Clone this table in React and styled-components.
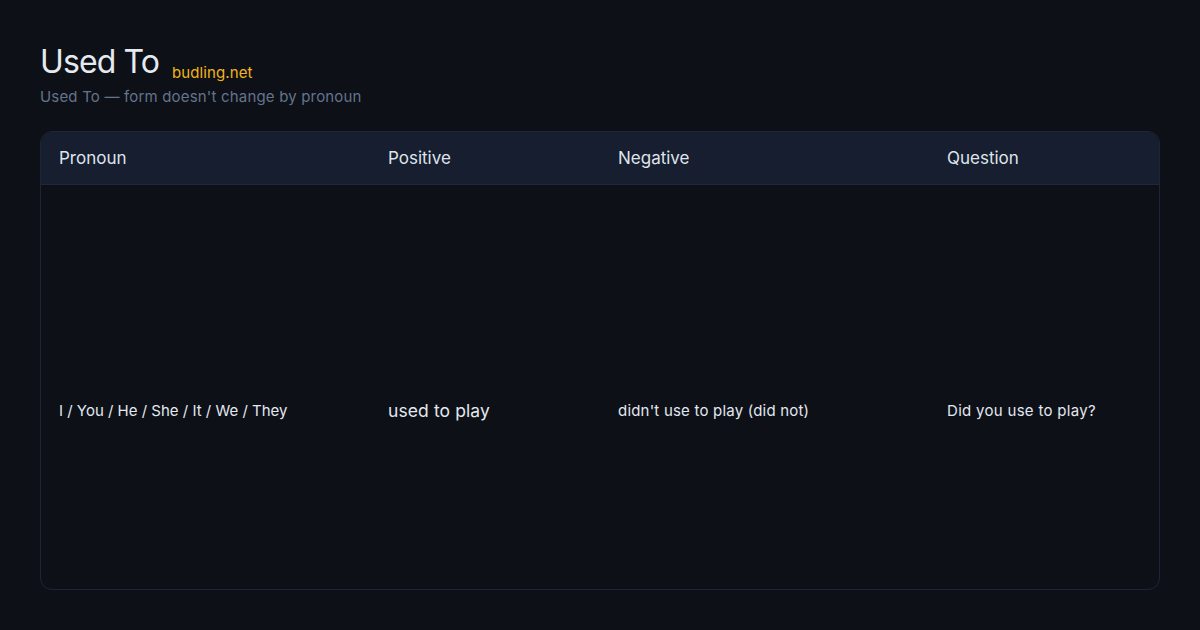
import React from "react";
import styled, { createGlobalStyle } from "styled-components";

const Global = createGlobalStyle`
  html, body { margin: 0; padding: 0; background: #0d1017; }
  body { font-family: Inter, "Noto Sans", sans-serif; }
  #root { height: 630px; }
`;

const Page = styled.div`
  box-sizing: border-box;
  height: 630px;
  padding: 41px 40px 40px;
  display: flex;
  flex-direction: column;
  background: #0d1017;
  color: #e2e8f0;
`;

const TitleRow = styled.div`
  display: flex;
  align-items: flex-end;
  gap: 13px;
`;

const Title = styled.h1`
  margin: 0;
  font-size: 32px;
  font-weight: 400;
  line-height: 42px;
  color: #e5e9f0;
  letter-spacing: -0.9px;
`;

const Brand = styled.span`
  font-size: 15px;
  line-height: 20px;
  color: #f4b41a;
  letter-spacing: 0.1px;
`;

const Subtitle = styled.p`
  margin: 4px 0 0;
  font-size: 15px;
  line-height: 20px;
  color: #64748b;
  letter-spacing: 0.18px;
`;

const Card = styled.div`
  flex: 1;
  margin-top: 24px;
  border: 1px solid #1e2636;
  border-radius: 12px;
  overflow: hidden;
  display: flex;
  flex-direction: column;
`;

const cols = "329px 230px 329px 1fr";

const HeadRow = styled.div`
  display: grid;
  grid-template-columns: ${cols};
  height: 52px;
  align-items: center;
  background: #171e2f;
  border-bottom: 1px solid #1e2a3c;
`;

const HeadCell = styled.div`
  padding-left: 18px;
  font-size: 17px;
  color: #dfe4ec;
`;

const BodyRow = styled.div`
  flex: 1;
  box-sizing: border-box;
  padding-top: 46px;
  display: grid;
  grid-template-columns: ${cols};
  align-items: center;
`;

const Cell = styled.div`
  padding-left: 18px;
  font-size: ${(p) => p.$size || 15}px;
  letter-spacing: ${(p) => p.$ls ?? 0.2}px;
  color: #e2e8f0;
`;

export default function App() {
  return (
    <>
      <Global />
      <Page>
        <TitleRow>
          <Title>Used To</Title>
          <Brand>budling.net</Brand>
        </TitleRow>
        <Subtitle>Used To — form doesn't change by pronoun</Subtitle>
        <Card>
          <HeadRow>
            <HeadCell>Pronoun</HeadCell>
            <HeadCell>Positive</HeadCell>
            <HeadCell>Negative</HeadCell>
            <HeadCell>Question</HeadCell>
          </HeadRow>
          <BodyRow>
            <Cell $size={15} $ls={0}>I / You / He / She / It / We / They</Cell>
            <Cell $size={17.5} $ls={0.1}>used to play</Cell>
            <Cell>didn't use to play (did not)</Cell>
            <Cell $ls={0.3}>Did you use to play?</Cell>
          </BodyRow>
        </Card>
      </Page>
    </>
  );
}
